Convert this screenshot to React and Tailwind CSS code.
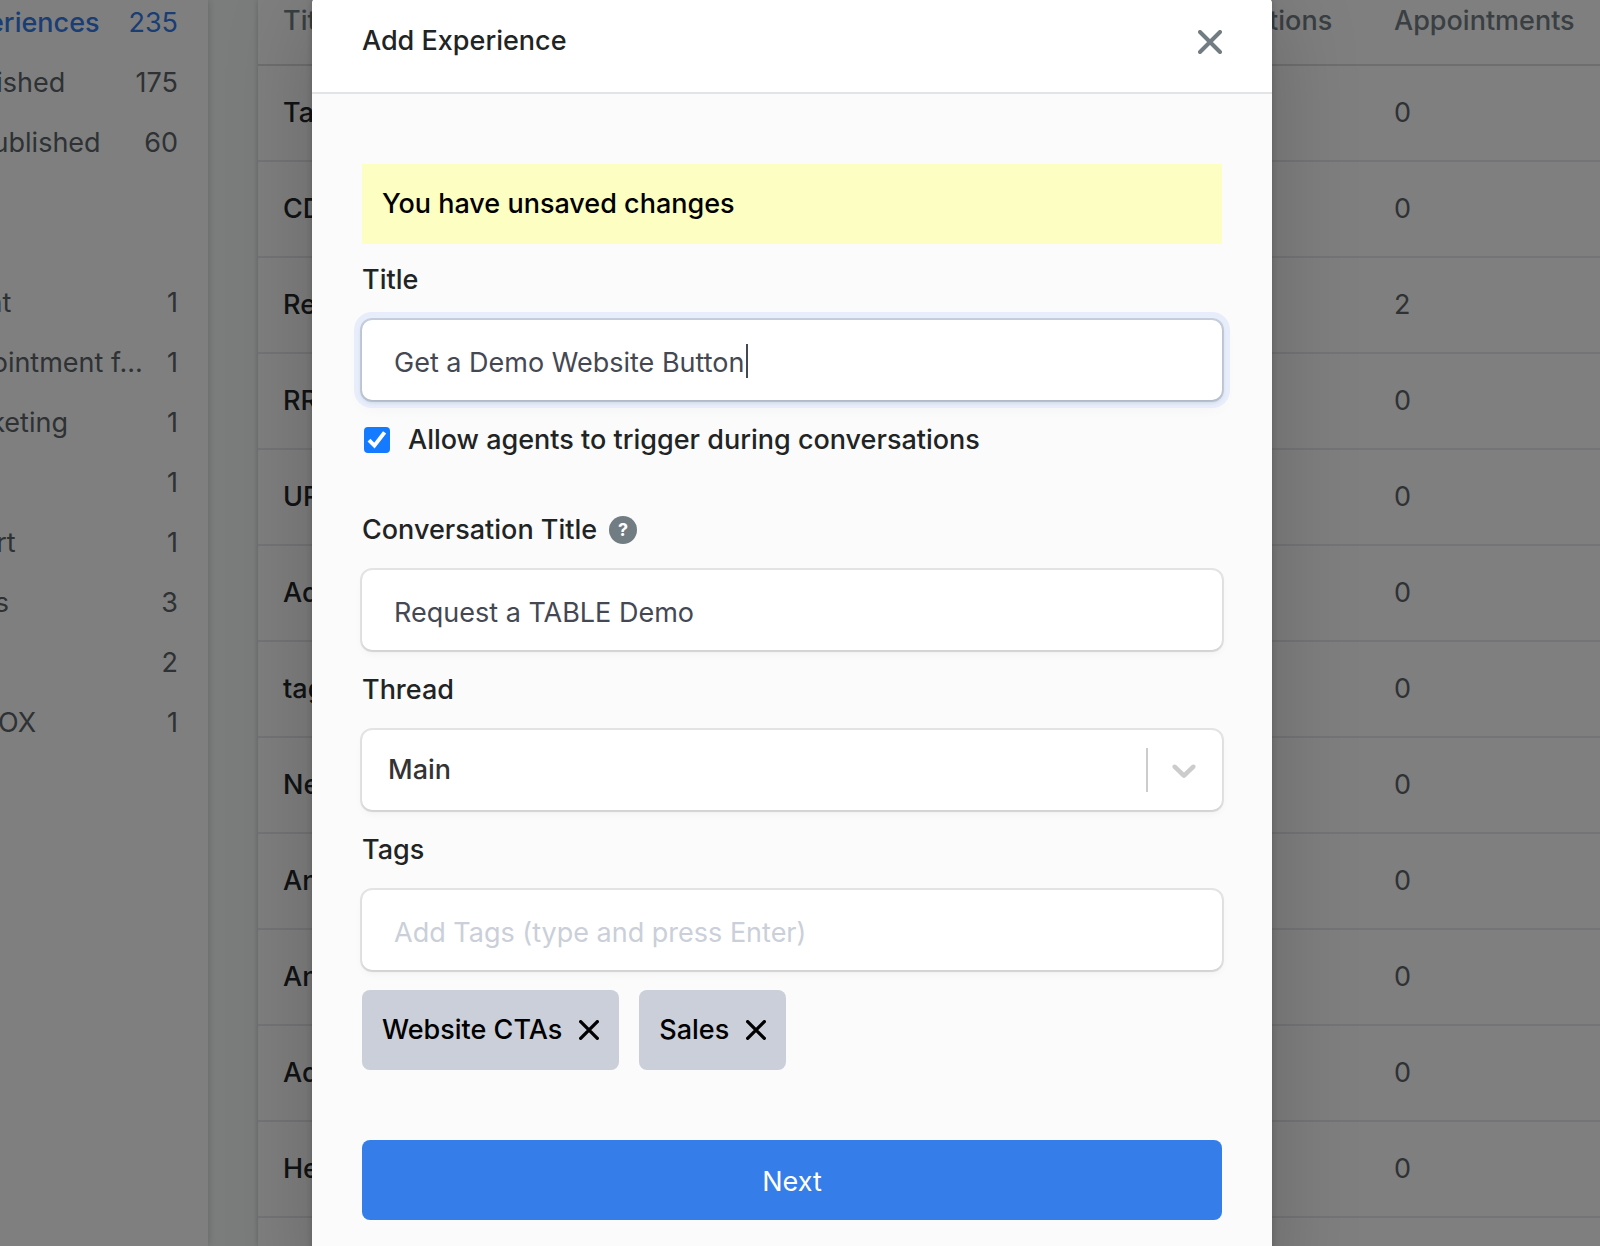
import { useState } from 'react';

const views = [
  { name: 'Experiences', count: 235, active: true },
  { name: 'Published', count: 175 },
  { name: 'Unpublished', count: 60 },
];

const tagCounts = [
  { name: 'Event', count: 1 },
  { name: 'Appointment f...', count: 1 },
  { name: 'Marketing', count: 1 },
  { name: 'CTA', count: 1 },
  { name: 'Smart', count: 1 },
  { name: 'Sales', count: 3 },
  { name: 'Q&A', count: 2 },
  { name: 'UNBOX', count: 1 },
];

const experiences = [
  { title: 'Ta', appointments: 0 },
  { title: 'CD', appointments: 0 },
  { title: 'Re', appointments: 2 },
  { title: 'RR', appointments: 0 },
  { title: 'UR', appointments: 0 },
  { title: 'Ad', appointments: 0 },
  { title: 'tag', appointments: 0 },
  { title: 'Ne', appointments: 0 },
  { title: 'An', appointments: 0 },
  { title: 'An', appointments: 0 },
  { title: 'Ad', appointments: 0 },
  { title: 'He', appointments: 0 },
  { title: 'Li', appointments: 0 },
];

const fieldClass =
  'block w-full h-20 rounded-[10px] bg-white outline-none shadow-[0_0_0_2px_rgba(0,0,0,0.09),0_2px_2px_rgba(0,0,0,0.05),0_4px_8px_rgba(0,0,0,0.04)]';
const inputClass = `${fieldClass} px-8 pt-1 text-[#444852] placeholder:text-[#cacfd9] placeholder:opacity-100`;
const focusClass =
  'focus:shadow-[0_0_0_2px_rgba(60,80,100,0.18),0_2px_4px_rgba(60,80,100,0.22),0_0_0_8px_#e7edfa,0_6px_16px_rgba(0,0,0,0.05)]';
const labelClass = 'block leading-10 font-medium text-[#1f2424]';

function CrossIcon({ size, strokeWidth }) {
  return (
    <svg width={size} height={size} viewBox="0 0 24 24" fill="none" stroke="currentColor" strokeWidth={strokeWidth} strokeLinecap="round" aria-hidden="true">
      <path d="M2 2l20 20M22 2L2 22" />
    </svg>
  );
}

function SidebarList({ items }) {
  return (
    <ul>
      {items.map((item) => (
        <li key={item.name} className={`flex h-[60px] items-center justify-between ${item.active ? 'text-[#357de8]' : 'text-[#5c6468]'}`}>
          <span className={item.active ? 'font-medium' : ''}>{item.name}</span>
          <span>{item.count}</span>
        </li>
      ))}
    </ul>
  );
}

function Background() {
  return (
    <div className="flex h-full bg-[#f7fbfa]">
      <aside className="-ml-[60px] w-[268px] shrink-0 bg-white pr-[30px] shadow-[0_0_8px_rgba(0,0,0,0.2)]">
        <nav className="-mt-[7px]">
          <SidebarList items={views} />
          <div className="h-[100px]" />
          <SidebarList items={tagCounts} />
        </nav>
      </aside>
      <main className="ml-[50px] min-w-0 flex-1 bg-white shadow-[0_0_6px_rgba(0,0,0,0.2)]">
        <table className="w-full table-fixed border-collapse text-left">
          <thead>
            <tr className="h-[65px] border-b-2 border-[#dcdcde]">
              <th className="pb-[22px] pl-[25px] font-medium text-[#737f85]">Title</th>
              <th className="w-[248px] pb-[22px] font-medium text-[#737f85]">Conversations</th>
              <th className="w-[206px] pb-[22px] font-medium text-[#737f85]">Appointments</th>
            </tr>
          </thead>
          <tbody>
            {experiences.map((exp, i) => (
              <tr key={i} className="h-24 border-b-2 border-[#e8e8ec]">
                <td className="pl-[25px] font-medium text-[#222628]">{exp.title}</td>
                <td />
                <td className="text-[#5c6468]">{exp.appointments}</td>
              </tr>
            ))}
          </tbody>
        </table>
      </main>
    </div>
  );
}

export default function App() {
  const [title, setTitle] = useState('Get a Demo Website Button');
  const [conversationTitle, setConversationTitle] = useState('Request a TABLE Demo');
  const [allowAgents, setAllowAgents] = useState(true);
  const [tags, setTags] = useState(['Website CTAs', 'Sales']);
  const [draft, setDraft] = useState('');

  const addTag = (e) => {
    if (e.key !== 'Enter') return;
    e.preventDefault();
    if (draft.trim()) setTags([...tags, draft.trim()]);
    setDraft('');
  };

  return (
    <div className="relative h-screen overflow-hidden font-[Inter,'Liberation_Sans',sans-serif] text-[27px] leading-10">
      <Background />

      <div className="absolute inset-0 flex justify-center overflow-hidden bg-black/50 pr-4">
        <div
          role="dialog"
          aria-labelledby="dialog-title"
          className="-mt-1 min-h-[1300px] w-[960px] shrink-0 rounded-lg bg-[#fbfbfb] shadow-[0_0_6px_rgba(0,0,0,0.2),0_14px_90px_rgba(0,0,0,0.2)]"
        >
          <header className="flex h-[98px] items-center justify-between rounded-t-lg border-b-2 border-[#e3e4e5] bg-white px-[50px] pb-1">
            <h2 id="dialog-title" className="pb-0.5 font-medium text-[#1f2424]">Add Experience</h2>
            <button type="button" aria-label="Close" className="text-[#727c83]">
              <CrossIcon size={24} strokeWidth={4} />
            </button>
          </header>

          <form className="px-[50px] pt-[70px]" onSubmit={(e) => e.preventDefault()}>
            <p className="mb-4 bg-[#fdfec2] p-5 font-medium text-black">You have unsaved changes</p>

            <label htmlFor="title" className={`${labelClass} mb-5`}>Title</label>
            <div className="relative">
              <input id="title" type="text" autoFocus value={title} onChange={(e) => setTitle(e.target.value)} className={`${inputClass} ${focusClass} caret-transparent`} />
              <span className="absolute top-6 left-[384px] h-[34px] w-0.5 bg-[#444852]" />
            </div>

            <div className="mt-5 mb-[50px] flex items-center gap-[18px] pl-0.5">
              <span className="grid size-[26px]">
                <input
                  id="allow-agents"
                  type="checkbox"
                  checked={allowAgents}
                  onChange={(e) => setAllowAgents(e.target.checked)}
                  className="peer col-start-1 row-start-1 size-[26px] appearance-none rounded border-2 border-[#b9bec6] bg-white checked:border-[#147aff] checked:bg-[#147aff]"
                />
                <svg viewBox="0 0 26 26" className="pointer-events-none invisible col-start-1 row-start-1 size-[26px] peer-checked:visible" fill="none" stroke="white" strokeWidth="4">
                  <path d="M5 13.2l5.4 5.4L20.6 5.4" />
                </svg>
              </span>
              <label htmlFor="allow-agents" className={labelClass}>Allow agents to trigger during conversations</label>
            </div>

            <div className="mb-5 flex items-center gap-3">
              <label htmlFor="conversation-title" className={labelClass}>Conversation Title</label>
              <button type="button" aria-label="Help" className="size-7 rounded-full bg-[#727c83] text-center text-[18px] leading-7 font-bold text-white">?</button>
            </div>
            <input id="conversation-title" type="text" value={conversationTitle} onChange={(e) => setConversationTitle(e.target.value)} className={inputClass} />

            <label htmlFor="thread" className={`${labelClass} my-5`}>Thread</label>
            <div className="relative">
              <select id="thread" className={`${fieldClass} appearance-none px-[26px] font-medium text-[#333]`}>
                <option>Main</option>
              </select>
              <span className="pointer-events-none absolute inset-y-[18px] right-0 flex w-[76px] items-center justify-center border-l-2 border-[#ccc] pr-0.5 text-[#ccc]">
                <svg width="40" height="40" viewBox="0 0 20 20" fill="currentColor" aria-hidden="true">
                  <path d="M4.516 7.548c0.436-0.446 1.043-0.481 1.576 0l3.908 3.747 3.908-3.747c0.533-0.481 1.141-0.446 1.574 0 0.436 0.445 0.408 1.197 0 1.615-0.406 0.418-4.695 4.502-4.695 4.502-0.217 0.223-0.502 0.335-0.787 0.335s-0.57-0.112-0.789-0.335c0 0-4.287-4.084-4.695-4.502s-0.436-1.17 0-1.615z" />
                </svg>
              </span>
            </div>

            <label htmlFor="tags" className={`${labelClass} my-5`}>Tags</label>
            <input id="tags" type="text" placeholder="Add Tags (type and press Enter)" value={draft} onChange={(e) => setDraft(e.target.value)} onKeyDown={addTag} className={inputClass} />

            <ul className="mt-5 flex flex-wrap gap-5">
              {tags.map((tag) => (
                <li key={tag} className="flex h-20 items-center gap-[17px] rounded-lg bg-[#cacfd9] px-5 font-medium text-black">
                  {tag}
                  <button type="button" aria-label={`Remove ${tag}`} onClick={() => setTags(tags.filter((t) => t !== tag))}>
                    <CrossIcon size={20} strokeWidth={4} />
                  </button>
                </li>
              ))}
            </ul>

            <button type="submit" className="mt-[70px] block h-20 w-full rounded-lg bg-[#357de8] pt-1 text-white">Next</button>
          </form>
        </div>
      </div>
    </div>
  );
}
